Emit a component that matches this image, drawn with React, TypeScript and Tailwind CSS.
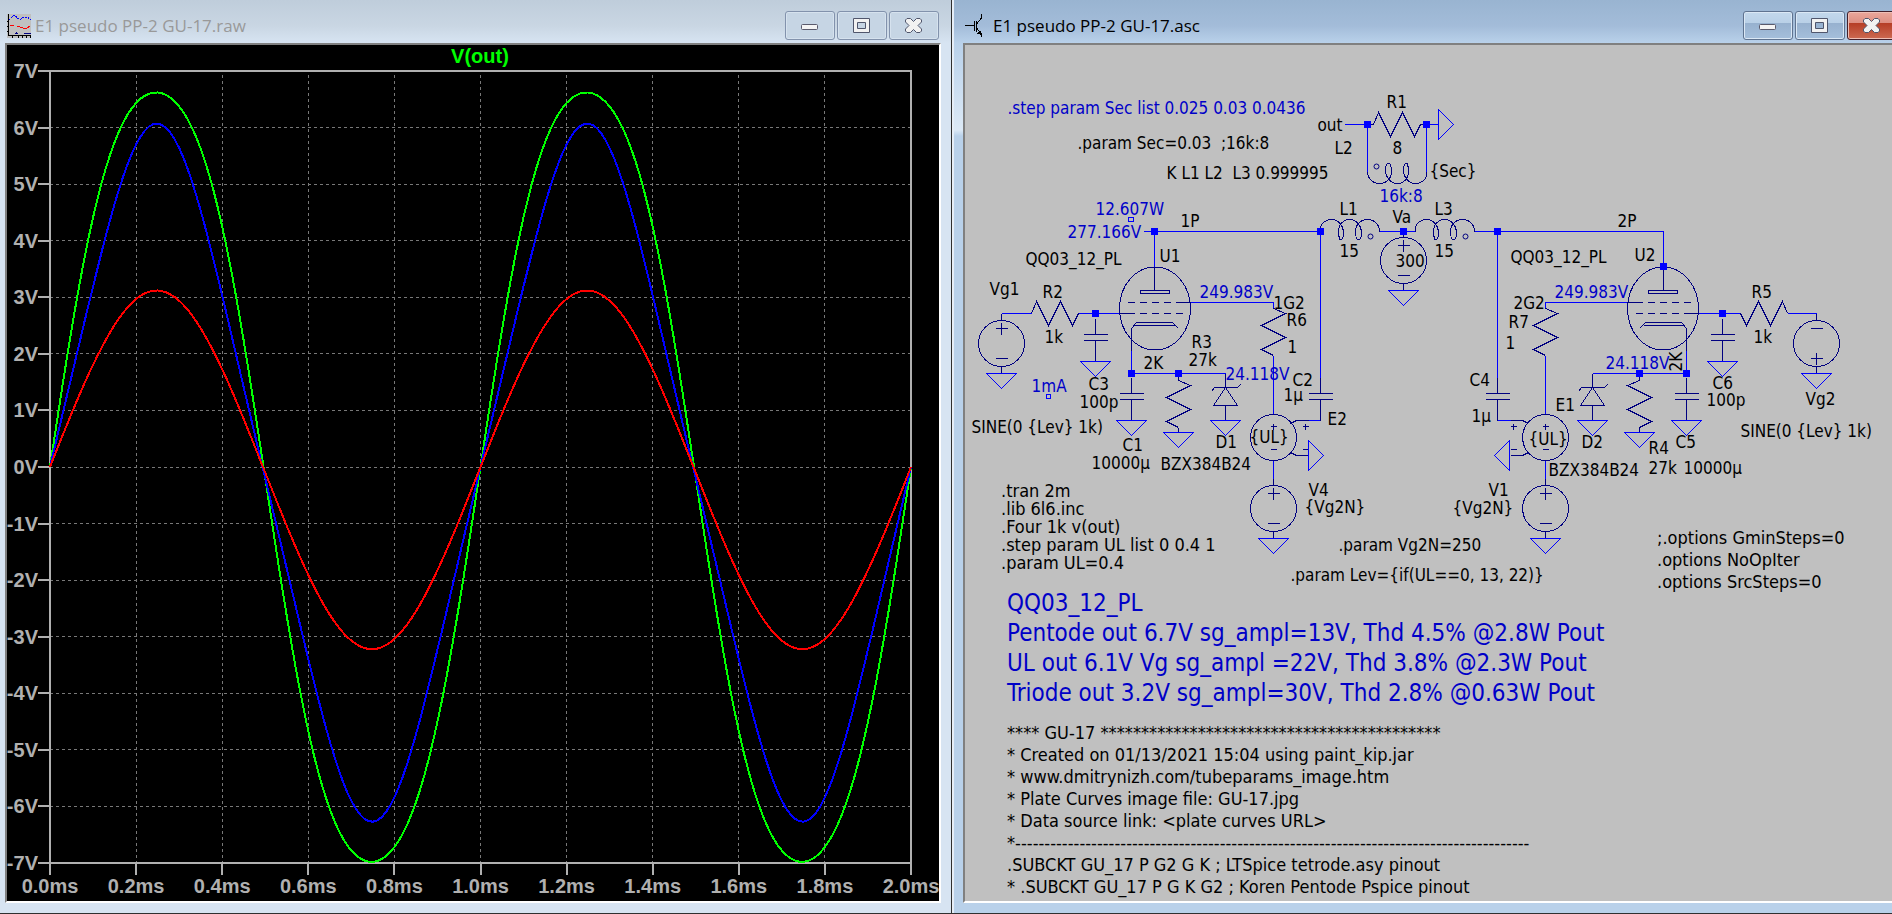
import type { ReactNode } from "react";

const SCHEMATIC_FONT = "font-['DejaVu_Sans_Condensed','Noto_Sans',sans-serif]";

/* ---------- window chrome ---------- */

function MinimizeIcon() {
  return (
    <svg width="20" height="21" viewBox="0 0 20 21" aria-hidden="true">
      <rect x="1.5" y="9.5" width="16" height="5" rx="1" fill="#f4f4f4" stroke="#5a5a6c" />
    </svg>
  );
}

function MaximizeIcon() {
  return (
    <svg width="20" height="21" viewBox="0 0 20 21" aria-hidden="true">
      <path
        d="M1.5 3.5h16v14h-16z M5.5 7.5v6h8v-6z"
        fill="#f2f2f2"
        fillRule="evenodd"
        stroke="#50566c"
        strokeLinejoin="round"
      />
    </svg>
  );
}

function CloseIcon() {
  return (
    <svg width="20" height="21" viewBox="0 0 20 21" aria-hidden="true">
      <path
        d="M3 3.5H6.5L9.5 6.5L12.5 3.5H16L17.5 5V7L14 10.5L17.5 14V16L16 17.5H12.5L9.5 14.5L6.5 17.5H3L1.5 16V14L5 10.5L1.5 7V5z"
        fill="#f2f2f2"
        stroke="#50566c"
        strokeLinejoin="round"
      />
    </svg>
  );
}

function CaptionButtons({ active }: { active?: boolean }) {
  const base = "flex h-[29px] w-[50px] items-center justify-center rounded-[3px] border";
  const plain = active
    ? "border-[#5f7390] bg-[linear-gradient(#c3d8ec_0%,#b9d0e7_40%,#97b1cf_42%,#a5bfdb_100%)] shadow-[inset_0_0_0_1px_#dbe8f5]"
    : "border-[#8292ac] bg-[#c6d5e4] shadow-[inset_0_0_0_1px_#d6e2ee]";
  const close = active
    ? "border-[#43202a] bg-[linear-gradient(#eaa79b_0%,#dd8f82_40%,#b63e26_42%,#cc6a52_100%)] shadow-[inset_0_0_0_1px_#eebfb6]"
    : plain;

  return (
    <div className="flex shrink-0 gap-0.5">
      <button type="button" aria-label="Minimize" className={`${base} ${plain}`}>
        <MinimizeIcon />
      </button>
      <button type="button" aria-label="Maximize" className={`${base} ${plain}`}>
        <MaximizeIcon />
      </button>
      <button type="button" aria-label="Close" className={`${base} ${close}`}>
        <CloseIcon />
      </button>
    </div>
  );
}

function WaveformIcon() {
  return (
    <svg width="24" height="24" viewBox="0 0 24 24" shapeRendering="crispEdges" aria-hidden="true">
      <rect width="24" height="24" fill="#c0c0c0" />
      <path d="M1.5 0v21.500h22.500" fill="none" stroke="#000" />
      <path d="M0 7.500h1M0 12.500h1M0 17.500h1M5.500 22v2M11.500 22v2M15.500 22v2M19.500 22v2M23.500 22v2" stroke="#000" />
      <path d="M2 6l5-5 6 5 3-3h4l4 3" fill="none" stroke="#00f" strokeDasharray="2 1" />
      <path d="M3 11.500h4M10 12l6 2h4l3-2" fill="none" stroke="#f00" />
      <path d="M9.500 18v2M8 19.500h3M17 19.500h7" stroke="#000080" />
    </svg>
  );
}

function TransistorIcon() {
  return (
    <svg width="18" height="24" viewBox="0 0 18 24" shapeRendering="crispEdges" aria-hidden="true">
      <path d="M0 11.500h9M16.500 0v4l-5 6M11.500 14l5 6v3" fill="none" stroke="#000" />
      <path d="M9.500 7v10M11.500 7v11" stroke="#000" />
      <path d="M17 21l-5-1 3-4z" fill="#000" />
    </svg>
  );
}

/* ---------- waveform viewer ---------- */

const PLOT = { left: 43, right: 904, top: 26, bottom: 818 };
const VOLTS = Array.from({ length: 15 }, (_, i) => 7 - i);
const TIMES = Array.from({ length: 11 }, (_, i) => i * 0.2);

const xOf = (ms: number) => PLOT.left + (ms / 2) * (PLOT.right - PLOT.left);
const yOf = (v: number) => PLOT.top + ((7 - v) / 14) * (PLOT.bottom - PLOT.top);

// sin, sin 3x, cos, cos 2x, dc
const TRACES = [
  { color: "#00ff00", h: [7.1, 0.3, 0.1, 0.04, -0.14] },
  { color: "#0000ff", h: [5.9, -0.27, 0.1, 0, -0.1] },
  { color: "#ff0000", h: [3.14, -0.03, 0.05, 0, -0.05] },
];

function tracePoints(h: number[]) {
  const points: string[] = [];
  for (let i = 0; i <= 200; i++) {
    const ms = i / 100;
    const w = 2 * Math.PI * ms;
    const v =
      h[0] * Math.sin(w) + h[1] * Math.sin(3 * w) + h[2] * Math.cos(w) + h[3] * Math.cos(2 * w) + h[4];
    points.push(`${xOf(ms).toFixed(1)},${yOf(v).toFixed(1)}`);
  }
  return points.join(" ");
}

function WaveformPlot() {
  return (
    <svg
      viewBox="0 0 932 856"
      className="block h-full w-full bg-black font-['Liberation_Sans',Arial,sans-serif] text-[20px] font-bold"
      role="img"
      aria-label="V(out) against time"
    >
      <g stroke="#787878" strokeDasharray="3 3" shapeRendering="crispEdges">
        {VOLTS.slice(1, -1).map((v) => (
          <line key={v} x1={PLOT.left} x2={PLOT.right} y1={yOf(v)} y2={yOf(v)} />
        ))}
        {TIMES.slice(1, -1).map((t) => (
          <line key={t} x1={xOf(t)} x2={xOf(t)} y1={PLOT.top + 4} y2={PLOT.bottom} />
        ))}
      </g>
      <g fill="none" stroke="#b0b0b0" strokeWidth="2" shapeRendering="crispEdges">
        <rect
          x={PLOT.left}
          y={PLOT.top}
          width={PLOT.right - PLOT.left}
          height={PLOT.bottom - PLOT.top}
        />
        {VOLTS.map((v) => (
          <line key={v} x1={PLOT.left - 12} x2={PLOT.left} y1={yOf(v)} y2={yOf(v)} />
        ))}
        {TIMES.map((t) => (
          <line key={t} x1={xOf(t)} x2={xOf(t)} y1={PLOT.bottom} y2={PLOT.bottom + 12} />
        ))}
      </g>
      <g fill="none" strokeWidth="2" shapeRendering="crispEdges">
        {TRACES.map((trace) => (
          <polyline key={trace.color} points={tracePoints(trace.h)} stroke={trace.color} />
        ))}
      </g>
      <g fill="#b0b0b0">
        {VOLTS.map((v) => (
          <text key={v} x="31" y={yOf(v) + 7} textAnchor="end">
            {v}V
          </text>
        ))}
        {TIMES.map((t) => (
          <text key={t} x={xOf(t)} y="848" textAnchor="middle">
            {t.toFixed(1)}ms
          </text>
        ))}
      </g>
      <text x="473" y="18" textAnchor="middle" fill="#00ff00">
        V(out)
      </text>
    </svg>
  );
}

/* ---------- schematic symbols ---------- */

type Place = { x: number; y: number; turn?: number; flip?: boolean };

function Sym({ x, y, turn = 0, flip, children }: Place & { children: ReactNode }) {
  return (
    <g transform={`translate(${x} ${y}) rotate(${turn})${flip ? " scale(-1 1)" : ""}`}>{children}</g>
  );
}

function Resistor(p: Place) {
  return (
    <Sym {...p}>
      <path d="M0 0l12 5-24 12 24 12-24 12 12 6" />
    </Sym>
  );
}

function Capacitor(p: Place) {
  return (
    <Sym {...p}>
      <path d="M0-16V0M-12 0H12M-12 6H12M0 6V27" />
    </Sym>
  );
}

function Inductor(p: Place) {
  return (
    <Sym {...p}>
      <path d="M0 0V-3C0-8 5-12 11-12C18-12 23-6 23 2C23 5 22 8 20 8C19 8 18 4 18 0C18-7 23-12 29-12C36-12 41-6 41 2C41 5 40 8 38 8C36 8 35 4 35 0C35-7 40-12 47-12C54-12 59-7 59 0" />
      <circle cx="50" cy="5" r="2.5" shapeRendering="auto" />
    </Sym>
  );
}

function Ground(p: Place) {
  return (
    <Sym {...p}>
      <path d="M-15 0H15L0 15z" stroke="#0000ff" />
    </Sym>
  );
}

function Source({ inverted, ...p }: Place & { inverted?: boolean }) {
  const plus = inverted ? 15 : -15;
  return (
    <Sym {...p}>
      <circle r="23" />
      <path d="M0-30V-23M0 23V30" />
      <path d={`M-6 ${plus}H6M0 ${plus - 6}V${plus + 6}M-6 ${-plus}H6`} />
    </Sym>
  );
}

function ControlledSource(p: Place) {
  return (
    <Sym {...p}>
      <circle r="23" />
      <path d="M-3-11H3M0-14V-8M-3 12H3" />
      <path d="M29-11H35M32-14V-8M29 12H35" />
      <path d="M17-14L23-17H35M17 15L23 18H35" />
    </Sym>
  );
}

function Zener(p: Place) {
  return (
    <Sym {...p}>
      <path d="M0-14V0M-14 4L-11 0H12L15-3M0 0L12 18H-12zM0 18V33" />
    </Sym>
  );
}

function Tetrode(p: Place) {
  return (
    <Sym {...p}>
      <ellipse cx="0.5" cy="0" rx="35.5" ry="41.5" />
      <path d="M0-42V-18M-14-18H15V-15H-14z" />
      <path d="M-27-6H-20M-15-6H-8M-3-6H4M9-6H16M21-6H36" />
      <path d="M-35 5H-20M-15 5H-8M-3 5H4M9 5H16M21 5H28" />
      <path d="M-23 42V20L-18 14H18L24 20M-20 17H20" />
    </Sym>
  );
}

const JUNCTIONS = [
  [1154, 231], [1320, 231], [1403, 231], [1497, 231], [1367, 124], [1426, 124], [1095, 313],
  [1131, 373], [1178, 373], [1663, 266], [1722, 313], [1639, 373], [1686, 373],
];

const WIRES = [
  "M1143 231H1320M1379 231H1414M1474 231H1663V266M1154 231V266",
  "M1344 124H1367V171M1426 171V124H1438",
  "M1320 231V380M1497 231V380",
  "M1001 313H1031M1078 313H1119M1698 313H1740M1787 313H1816",
  "M1190 302H1273V308M1628 302H1545V308",
  "M1131 350V373H1225M1686 350V373H1592",
  "M1273 355V414M1545 355V414M1273 460V485M1545 460V485",
  "M1308 420H1320M1497 420H1510",
];

const LABELS: [number, number, string][] = [
  [1077, 148, ".param Sec=0.03  ;16k:8"],
  [1166, 178, "K L1 L2  L3 0.999995"],
  [1180, 226, "1P"],
  [1025, 264, "QQ03_12_PL"],
  [1159, 261, "U1"],
  [989, 294, "Vg1"],
  [1042, 297, "R2"],
  [1044, 342, "1k"],
  [1143, 368, "2K"],
  [1191, 347, "R3"],
  [1188, 365, "27k"],
  [1317, 130, "out"],
  [1386, 107, "R1"],
  [1334, 153, "L2"],
  [1392, 153, "8"],
  [1429, 176, "{Sec}"],
  [1339, 214, "L1"],
  [1434, 214, "L3"],
  [1392, 222, "Va"],
  [1339, 256, "15"],
  [1395, 266, "300"],
  [1434, 256, "15"],
  [1510, 262, "QQ03_12_PL"],
  [1273, 308, "1G2"],
  [1286, 325, "R6"],
  [1287, 352, "1"],
  [1513, 308, "2G2"],
  [1508, 327, "R7"],
  [1505, 348, "1"],
  [1617, 226, "2P"],
  [1634, 260, "U2"],
  [1751, 297, "R5"],
  [1753, 342, "1k"],
  [1712, 388, "C6"],
  [1706, 405, "100p"],
  [1805, 404, "Vg2"],
  [1740, 436, "SINE(0 {Lev} 1k)"],
  [1555, 410, "E1"],
  [1581, 447, "D2"],
  [1648, 453, "R4"],
  [1648, 473, "27k"],
  [1683, 473, "10000µ"],
  [1675, 447, "C5"],
  [1548, 475, "BZX384B24"],
  [1528, 444, "{UL}"],
  [1488, 495, "V1"],
  [1452, 513, "{Vg2N}"],
  [1469, 385, "C4"],
  [1471, 421, "1µ"],
  [1088, 389, "C3"],
  [1079, 407, "100p"],
  [971, 432, "SINE(0 {Lev} 1k)"],
  [1122, 450, "C1"],
  [1091, 468, "10000µ"],
  [1160, 469, "BZX384B24"],
  [1215, 447, "D1"],
  [1292, 385, "C2"],
  [1283, 400, "1µ"],
  [1327, 424, "E2"],
  [1249, 442, "{UL}"],
  [1308, 495, "V4"],
  [1304, 512, "{Vg2N}"],
  [1338, 550, ".param Vg2N=250"],
  [1290, 580, ".param Lev={if(UL==0, 13, 22)}"],
];

const BLUE_LABELS: [number, number, string][] = [
  [1007, 113, ".step param Sec list 0.025 0.03 0.0436"],
  [1095, 214, "12.607W"],
  [1067, 237, "277.166V"],
  [1199, 297, "249.983V"],
  [1225, 379, "24.118V"],
  [1379, 201, "16k:8"],
  [1554, 297, "249.983V"],
  [1605, 368, "24.118V"],
  [1031, 391, "1mA"],
];

function Circuit() {
  return (
    <svg
      width="933"
      height="856"
      viewBox="964.5 44.5 933 856"
      className="block"
      role="img"
      aria-label="Push-pull amplifier schematic"
    >
      <g fill="none" stroke="#000080" shapeRendering="crispEdges">
        <path d={WIRES.join("")} stroke="#0000ff" />
        <path d="M1128 217h5v4h-5zM1046 394h4v4h-4z" stroke="#0000ff" />

        <Resistor x={1031} y={313} turn={-90} />
        <Resistor x={1787} y={313} turn={90} flip />
        <Resistor x={1373} y={124} turn={-90} />
        <Resistor x={1178} y={380} />
        <Resistor x={1639} y={380} flip />
        <Resistor x={1273} y={308} />
        <Resistor x={1545} y={308} />
        <path d="M1178 373V380M1178 427V432M1639 373V380M1639 427V432M1367 124H1373M1420 124H1426" />

        <Capacitor x={1095} y={334} />
        <Capacitor x={1722} y={334} />
        <Capacitor x={1131} y={393} />
        <Capacitor x={1686} y={393} />
        <Capacitor x={1320} y={393} />
        <Capacitor x={1497} y={393} />

        <Inductor x={1320} y={231} />
        <Inductor x={1415} y={231} />
        <Inductor x={1426} y={171} turn={180} />

        <Source x={1001} y={343} />
        <Source x={1816} y={343} inverted />
        <Source x={1403} y={260} />
        <Source x={1273} y={508} />
        <Source x={1545} y={508} />
        <ControlledSource x={1273} y={437} />
        <ControlledSource x={1545} y={437} flip />

        <Zener x={1225} y={387} />
        <Zener x={1592} y={387} />
        <Tetrode x={1154} y={308} />
        <Tetrode x={1663} y={308} flip />

        <Ground x={1001} y={373} />
        <Ground x={1816} y={373} />
        <Ground x={1095} y={361} />
        <Ground x={1722} y={361} />
        <Ground x={1131} y={420} />
        <Ground x={1686} y={420} />
        <Ground x={1178} y={432} />
        <Ground x={1639} y={432} />
        <Ground x={1225} y={420} />
        <Ground x={1592} y={420} />
        <Ground x={1403} y={290} />
        <Ground x={1273} y={538} />
        <Ground x={1545} y={538} />
        <Ground x={1438} y={124} turn={-90} />
        <Ground x={1308} y={455} turn={-90} />
        <Ground x={1509} y={455} turn={90} />
      </g>
      <g fill="#0000ff" shapeRendering="crispEdges">
        {JUNCTIONS.map(([x, y]) => (
          <rect key={`${x}-${y}`} x={x - 3.5} y={y - 3.5} width="7" height="7" />
        ))}
      </g>
      <g className="text-[17px] [&_text]:whitespace-pre">
        {LABELS.map(([x, y, label]) => (
          <text key={`${x}-${y}`} x={x} y={y}>
            {label}
          </text>
        ))}
        <text transform="translate(1681 371) rotate(-90)">2K</text>
        <g fill="#0000c8">
          {BLUE_LABELS.map(([x, y, label]) => (
            <text key={`${x}-${y}`} x={x} y={y}>
              {label}
            </text>
          ))}
        </g>
      </g>
    </svg>
  );
}

const DIRECTIVES = `.tran 2m
.lib 6l6.inc
.Four 1k v(out)
.step param UL list 0 0.4 1
.param UL=0.4`;

const OPTIONS = `;.options GminSteps=0
.options NoOpIter
.options SrcSteps=0`;

const RESULTS = `QQ03_12_PL
Pentode out 6.7V sg_ampl=13V, Thd 4.5% @2.8W Pout
UL out 6.1V Vg sg_ampl =22V, Thd 3.8% @2.3W Pout
Triode out 3.2V sg_ampl=30V, Thd 2.8% @0.63W Pout`;

const MODEL = `**** GU-17 ******************************************
* Created on 01/13/2021 15:04 using paint_kip.jar
* www.dmitrynizh.com/tubeparams_image.htm
* Plate Curves image file: GU-17.jpg
* Data source link: <plate curves URL>
*----------------------------------------------------------------------------------------
.SUBCKT GU_17 P G2 G K ; LTSpice tetrode.asy pinout
* .SUBCKT GU_17 P G K G2 ; Koren Pentode Pspice pinout`;

function Note({ className, children }: { className: string; children: string }) {
  return <p className={`absolute whitespace-pre ${className}`}>{children}</p>;
}

/* ---------- page ---------- */

export default function App() {
  return (
    <main className="grid h-screen min-h-[640px] grid-cols-[952fr_940fr] overflow-hidden border-b border-[#303030] bg-[#b9d1ea]">
      <section className="flex min-w-0 flex-col border-r border-[#303030] bg-[#d7e4f2] pr-2.5 pb-2.5">
        <header className="-mr-2.5 flex h-[43px] shrink-0 items-start justify-between bg-[linear-gradient(#bfcddb,#c9d6e3_60%,#d7e4f2)] pr-3 pl-[7px]">
          <div className="flex items-center gap-1 pt-[13px] text-[#999999]">
            <WaveformIcon />
            <h1 className="font-['Open_Sans','Noto_Sans',sans-serif] text-[17px] leading-[26px]">
              E1 pseudo PP-2 GU-17.raw
            </h1>
          </div>
          <div className="pt-[11px]">
            <CaptionButtons />
          </div>
        </header>
        <div className="ml-[5px] min-h-0 flex-1 border-2 border-t-[#808080] border-r-white border-b-white border-l-[#808080]">
          <WaveformPlot />
        </div>
      </section>

      <section className="flex min-w-0 flex-col overflow-hidden border-l-2 border-[#e6eef7] bg-[linear-gradient(#b9d1ea_43px,#dce9f6_130px,#b9d1ea_136px)] pb-2.5">
        <header className="flex h-[43px] shrink-0 items-start justify-between bg-[linear-gradient(#99b4d1,#a3bcd9_60%,#b9d1ea)] pl-[11px]">
          <div className="flex items-center gap-2.5 pt-[13px] text-black">
            <TransistorIcon />
            <h1 className="font-['Open_Sans','Noto_Sans',sans-serif] text-[17px] leading-[26px]">
              E1 pseudo PP-2 GU-17.asc
            </h1>
          </div>
          <div className="-mr-[5px] pt-[11px]">
            <CaptionButtons active />
          </div>
        </header>
        <div
          className={`relative ml-[9px] min-h-0 flex-1 overflow-hidden border-y-2 border-l-2 border-t-[#808080] border-b-white border-l-[#808080] bg-[#c0c0c0] text-black ${SCHEMATIC_FONT}`}
        >
          <Circuit />
          <Note className="top-[437px] left-9 text-[18px] leading-[18px]">{DIRECTIVES}</Note>
          <Note className="top-[482px] left-[692px] text-[18px] leading-[22px]">{OPTIONS}</Note>
          <Note className="top-[543px] left-[42px] text-[24px] leading-[30px] text-[#0000c8]">
            {RESULTS}
          </Note>
          <Note className="top-[677px] left-[42px] text-[18px] leading-[22px]">{MODEL}</Note>
        </div>
      </section>
    </main>
  );
}
